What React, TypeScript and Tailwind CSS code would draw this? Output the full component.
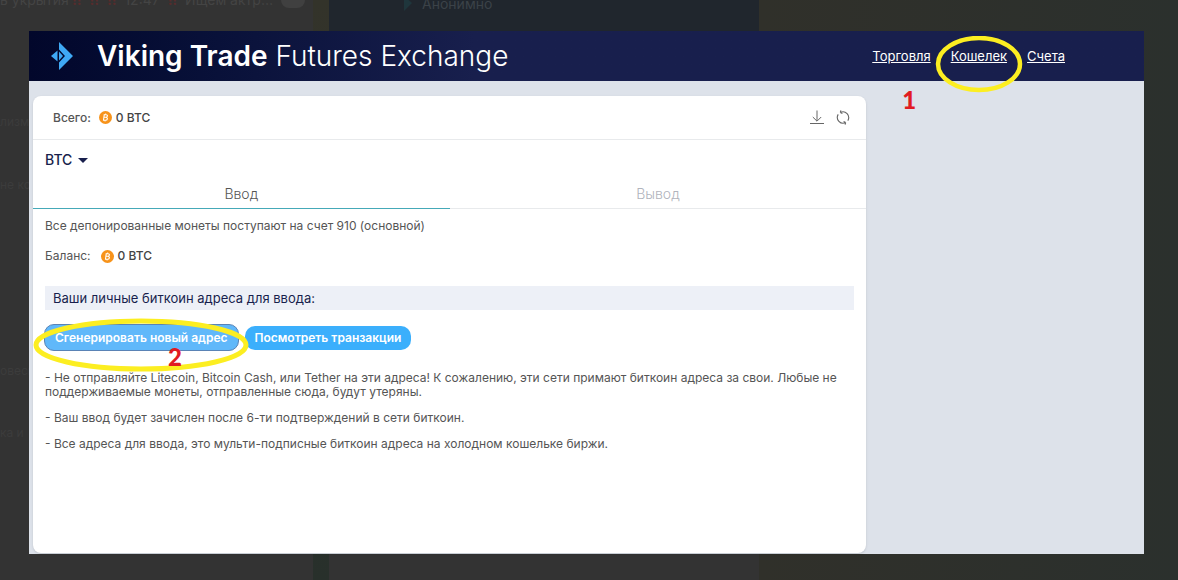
import type { ReactNode } from "react";

function Logo() {
  return (
    <svg viewBox="0 0 22 28" className="h-7 w-[22px]" aria-hidden="true">
      <path d="M8 0 L22 14 L8 28 V20.5 L14 14 L8 7.5 Z" fill="#3fa9f5" />
      <path d="M6.5 8.5 V19.5 L0 14 Z" fill="#3fa9f5" />
      <path d="M8 9.5 L12 14 L8 18.5 Z" fill="#3fa9f5" />
    </svg>
  );
}

function Coin() {
  return (
    <svg viewBox="0 0 14 14" className="h-[13px] w-[13px]" aria-hidden="true">
      <circle cx="7" cy="7" r="7" fill="#f7931a" />
      <g fill="none" stroke="#fff" strokeWidth="1.2">
        <path d="M5.7 3.6 L4.8 10.2 M5.2 4 H7.6 C9.8 4.1 9.4 6.8 7.4 6.8 H5.2 M7.4 6.8 C9.9 7 9.3 10 7 10 H4.4" />
        <path d="M7.2 2.8 L7 4 M6.6 10 L6.4 11.2" />
      </g>
    </svg>
  );
}

function Amount({ children }: { children: ReactNode }) {
  return (
    <span className="flex items-center gap-1 font-medium text-[#444]">
      <Coin />
      {children}
    </span>
  );
}

function Backdrop() {
  return (
    <div className="absolute inset-0 flex overflow-hidden bg-[#2e302c] text-sm leading-4 text-[#444444]" aria-hidden="true">
      <div className="flex w-[313px] shrink-0 flex-col bg-[#333333]">
        <div className="-mt-2 flex items-center gap-2 whitespace-nowrap">
          <span className="w-16">ь укрытия</span>
          <span className="flex gap-2 font-bold text-[#582c2c]">
            <span>!!</span>
            <span>!!</span>
            <span>!!</span>
          </span>
          <span>12:47</span>
          <span className="font-bold text-[#582c2c]">!!</span>
          <span>Ищем актр…</span>
          <span className="h-4 w-6 rounded-full bg-[#404040]" />
        </div>
        <div className="flex w-[29px] flex-col overflow-hidden text-xs whitespace-nowrap text-[#3c3c3c]">
          <p className="mt-[106px]">лизм</p>
          <p className="mt-[47px]">не ко</p>
          <p className="mt-[170px]">овеси</p>
          <p className="mt-[46px]">ка и</p>
        </div>
      </div>
      <div className="w-4 shrink-0 bg-linear-to-b from-[#33332a] to-[#28302b]" />
      <div className="flex w-[430px] shrink-0 flex-col bg-[#20262d]">
        <div className="-mt-1 flex flex-1 pl-[75px] text-[#3b4248]">
          <svg viewBox="0 0 8 16" className="mr-[10px] h-4 w-2" aria-hidden="true">
            <path d="M0 0 L8 7 L0 15 Z" fill="#1f363c" />
          </svg>
          <span>Анонимно</span>
        </div>
        <div className="h-[26px] bg-[#333333]" />
      </div>
      <div className="flex-1 bg-linear-to-r from-[#30302a] to-[#2b302d]" />
    </div>
  );
}

export default function App() {
  return (
    <div className="relative flex min-h-screen pt-[31px] pr-[34px] pb-[26px] pl-[29px] font-['Inter',sans-serif]">
      <Backdrop />

      <div className="relative flex flex-1 flex-col bg-[#dde2ea]">
        <header className="flex h-[50px] items-center bg-linear-to-r from-[#02072b] to-[#181f4d] to-40% pr-[79px] pl-[22px] text-white">
          <Logo />
          <h1 className="ml-6 flex-1 text-[28px] leading-8 font-light">
            <b className="font-semibold">Viking Trade</b> Futures Exchange
          </h1>
          <nav className="flex gap-5 text-[13px] leading-5">
            <a href="#trade" className="underline">
              Торговля
            </a>
            <span className="relative">
              <a href="#wallet" className="underline">
                Кошелек
              </a>
              <svg viewBox="0 0 88 57" className="pointer-events-none absolute -top-[10px] -left-4 z-10 h-[57px] w-[88px] max-w-none" aria-hidden="true">
                <ellipse cx="44" cy="28" rx="41" ry="26" fill="none" stroke="#fcee21" strokeWidth="4.5" />
              </svg>
              <span className="absolute top-10 right-[91px] font-['Lato',sans-serif] text-2xl leading-7 font-black text-[#e11b22]">1</span>
            </span>
            <a href="#accounts" className="underline">
              Счета
            </a>
          </nav>
        </header>

        <div className="flex flex-1 pt-[15px] pb-px pl-1">
          <main className="flex w-3/4 flex-col rounded-lg bg-white text-xs text-[#555] shadow-sm">
            <div className="flex h-11 items-center border-b border-[#e8eaec] pr-4 pl-5">
              <span className="mr-2 font-medium">Всего:</span>
              <Amount>0 BTC</Amount>
              <button type="button" aria-label="Скачать" className="ml-auto">
                <svg viewBox="0 0 14 15" className="h-[15px] w-[14px]" fill="none" stroke="#666" strokeWidth="1">
                  <path d="M7 0.5 V11 M2.8 7 L7 11.2 L11.2 7 M0 13.5 H14" />
                </svg>
              </button>
              <button type="button" aria-label="Обновить" className="ml-3">
                <svg viewBox="0 0 14 15" className="h-[15px] w-[14px]" fill="none" stroke="#666" strokeWidth="1.1">
                  <path d="M4.3 2.4 A5.8 5.8 0 0 1 11.8 10.6 M4.3 2.4 L4.9 0.3 M4.3 2.4 L6.4 3.4" />
                  <path d="M9.7 12.6 A5.8 5.8 0 0 1 2.2 4.4 M9.7 12.6 L9.1 14.7 M9.7 12.6 L7.6 11.6" />
                </svg>
              </button>
            </div>

            <button type="button" className="mt-3 ml-3 flex items-center gap-[6px] self-start text-sm leading-4 font-medium text-[#181f4d]">
              BTC
              <svg viewBox="0 0 10 5" className="h-[5px] w-[10px]" aria-hidden="true">
                <path d="M0 0 H10 L5 5 Z" fill="currentColor" />
              </svg>
            </button>

            <div role="tablist" className="mt-3 flex text-sm font-light">
              <button role="tab" aria-selected="true" type="button" className="h-[29px] flex-1 border-b border-[#45a9b8]">
                Ввод
              </button>
              <button role="tab" aria-selected="false" type="button" className="h-[29px] flex-1 border-b border-[#e8eaec] text-[#b0b3bc]">
                Вывод
              </button>
            </div>

            <section className="flex flex-col px-3 pt-[9px]">
              <p>Все депонированные монеты поступают на счет 910 (основной)</p>
              <div className="mt-[14px] flex items-center gap-[10px]">
                <span>Баланс:</span>
                <Amount>0 BTC</Amount>
              </div>
              <h2 className="mt-[22px] bg-[#edf0f7] px-2 text-[13px] leading-6 text-[#181f4d]">Ваши личные биткоин адреса для ввода:</h2>
              <div className="relative mt-[14px] -ml-px flex items-center gap-[6px] font-semibold text-white">
                <button type="button" className="h-[27px] rounded-[10px] border border-[#5a83b5] bg-[#60b8fa] px-[10px]">
                  Сгенерировать новый адрес
                </button>
                <button type="button" className="h-6 rounded-[10px] bg-[#3baffc] px-[10px]">
                  Посмотреть транзакции
                </button>
                <svg viewBox="0 0 218 54" className="pointer-events-none absolute -top-[6px] -left-3 h-[54px] w-[218px]" aria-hidden="true">
                  <ellipse cx="109" cy="27" rx="105" ry="24" fill="none" stroke="#fcee21" strokeWidth="5" />
                </svg>
                <span className="absolute top-[19px] left-[124px] font-['Lato',sans-serif] text-2xl leading-7 font-black text-[#e11b22]">2</span>
              </div>
              <div className="mt-5 flex flex-col gap-3 leading-[14px]">
                <p>
                  - Не отправляйте Litecoin, Bitcoin Cash, или Tether на эти адреса! К сожалению, эти сети примают биткоин адреса за свои. Любые не
                  поддерживаемые монеты, отправленные сюда, будут утеряны.
                </p>
                <p>- Ваш ввод будет зачислен после 6-ти подтверждений в сети биткоин.</p>
                <p>- Все адреса для ввода, это мульти-подписные биткоин адреса на холодном кошельке биржи.</p>
              </div>
            </section>
          </main>
        </div>
      </div>
    </div>
  );
}
